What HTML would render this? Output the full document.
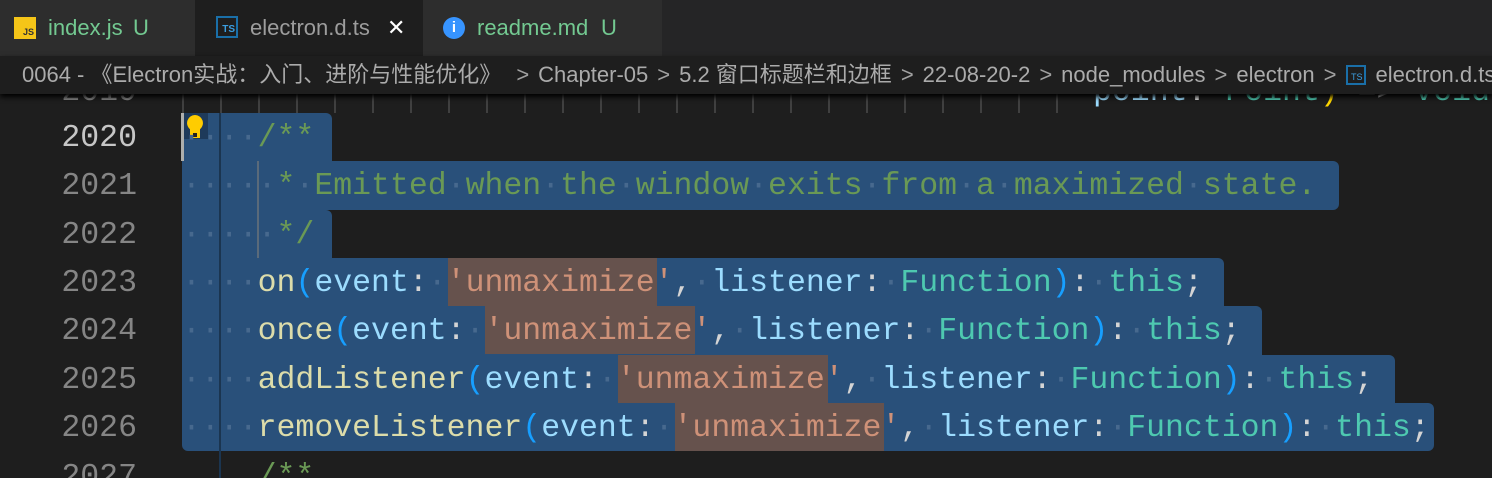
<!DOCTYPE html>
<html><head><meta charset="utf-8"><style>
*{margin:0;padding:0;box-sizing:border-box}
html,body{width:1492px;height:478px;overflow:hidden}
body{background:#1e1e1e;position:relative;font-family:"Liberation Sans","Noto Sans CJK SC",sans-serif}
.tabs{position:absolute;left:0;top:0;width:1492px;height:56px;background:#252526}
.tab{position:absolute;top:0;height:56px;background:#2d2d2d;font-size:22px;line-height:56px;white-space:nowrap}
.bc{position:absolute;left:0;top:56px;width:1492px;height:38px;background:#1e1e1e;color:#ababab;font-size:22px;line-height:38px;white-space:nowrap;padding-left:22px;box-shadow:0 3px 5px #000;z-index:5;overflow:hidden}
.bc i{font-style:normal;display:inline-block;margin:0 9px 0 9px;color:#a0a0a0}
.ln{position:absolute;left:0;width:137px;text-align:right;font-family:"Liberation Mono",monospace;font-size:31.5px;color:#858585;height:48.4px;line-height:52px}
.code{position:absolute;left:182px;font-family:"Liberation Mono",monospace;font-size:31.5px;white-space:pre;height:48.4px;line-height:52px;color:#d4d4d4}
.sel{position:absolute;background:#29507a;height:48.6px}
.str{position:absolute;background:#66524d;height:48.4px}
.w{color:#47698e}.f{color:#dcdcaa}.p{color:#9cdcfe}.s{color:#ce9178}.t{color:#4ec9b0}.c{color:#6a9955}.b{color:#179fff}
.tick{position:absolute;top:94px;width:2px;height:19px;background:#404040}
</style></head><body>
<div class="tabs">
 <div class="tab" style="left:0;width:195px">
  <span style="position:absolute;left:14px;top:17px;width:22px;height:22px;background:#f5c518;font-size:9px;line-height:9px;color:#333;font-weight:bold"><span style="position:absolute;right:2px;bottom:2px">JS</span></span>
  <span style="position:absolute;left:48px;color:#73c991">index.js</span><span style="position:absolute;left:133px;color:#73c991">U</span></div>
 <div class="tab" style="left:195px;width:228px;background:#1e1e1e">
  <span style="position:absolute;left:21px;top:16px;width:22px;height:22px;border:2px solid #1a6fa8;font-size:10px;line-height:10px;color:#3b9ee0;font-weight:bold"><span style="position:absolute;right:1px;bottom:1px">TS</span></span>
  <span style="position:absolute;left:55px;color:#9d9d9d">electron.d.ts</span><span style="position:absolute;left:192px;color:#fff;font-size:22px">✕</span></div>
 <div class="tab" style="left:423px;width:239px">
  <span style="position:absolute;left:20px;top:17px;width:22px;height:22px;border-radius:50%;background:#3794ff;color:#fff;font-size:15px;line-height:22px;text-align:center;font-weight:bold">i</span>
  <span style="position:absolute;left:54px;color:#73c991">readme.md</span><span style="position:absolute;left:178px;color:#73c991">U</span></div>
</div>
<div class="bc">0064 - 《Electron实战：入门、进阶与性能优化》 <i>&gt;</i>Chapter-05<i>&gt;</i>5.2 窗口标题栏和边框<i>&gt;</i>22-08-20-2<i>&gt;</i>node_modules<i>&gt;</i>electron<i>&gt;</i><span style="display:inline-block;width:20px;height:20px;border:2px solid #1a6fa8;vertical-align:-3px;font-size:9px;line-height:9px;color:#3b9ee0;position:relative;margin:0 10px 0 0"><span style="position:absolute;right:1px;bottom:1px">TS</span></span>electron.d.ts</div>

<div class="ln" style="top:67px">2019</div>
<div class="code" style="top:67px;left:1093px"><span class="p">point</span>: <span class="t">Point</span><span style="color:#ffd700">)</span> =&gt; <span class="t">void</span></div>
<div class="tick" style="left:182px"></div><div class="tick" style="left:220px"></div><div class="tick" style="left:258px"></div><div class="tick" style="left:296px"></div><div class="tick" style="left:334px"></div><div class="tick" style="left:372px"></div><div class="tick" style="left:410px"></div><div class="tick" style="left:448px"></div><div class="tick" style="left:486px"></div><div class="tick" style="left:524px"></div><div class="tick" style="left:562px"></div><div class="tick" style="left:600px"></div><div class="tick" style="left:638px"></div><div class="tick" style="left:676px"></div><div class="tick" style="left:714px"></div><div class="tick" style="left:752px"></div><div class="tick" style="left:790px"></div><div class="tick" style="left:828px"></div><div class="tick" style="left:866px"></div><div class="tick" style="left:904px"></div><div class="tick" style="left:942px"></div><div class="tick" style="left:980px"></div><div class="tick" style="left:1018px"></div><div class="tick" style="left:1056px"></div>

<div class="sel" style="left:182px;top:113px;width:150px;border-radius:0 6px 0 0"></div>
<div class="sel" style="left:182px;top:161px;width:1157px;border-radius:0 6px 6px 0"></div>
<div class="sel" style="left:182px;top:210px;width:150px;border-radius:0 6px 0 0"></div>
<div class="sel" style="left:182px;top:258px;width:1042px;border-radius:0 6px 0 0"></div>
<div class="sel" style="left:182px;top:306px;width:1080px;border-radius:0 6px 0 0"></div>
<div class="sel" style="left:182px;top:355px;width:1213px;border-radius:0 6px 0 0"></div>
<div class="sel" style="left:182px;top:403px;width:1252px;border-radius:0 6px 6px 6px;height:48px"></div>
<div class="str" style="left:448px;top:258px;width:209px"></div>
<div class="str" style="left:485px;top:306px;width:210px"></div>
<div class="str" style="left:618px;top:355px;width:210px"></div>
<div class="str" style="left:675px;top:403px;width:209px"></div>
<div style="position:absolute;left:219px;top:113px;width:2px;height:365px;background:#1b3550"></div>
<div style="position:absolute;left:257px;top:161px;width:2px;height:97px;background:#5a6a7a"></div>
<div style="position:absolute;left:181px;top:113px;width:3px;height:48px;background:#aeafad"></div>
<div style="position:absolute;left:184px;top:113px;width:24px;height:26px;background:#1e3a5a"></div>
<svg style="position:absolute;left:185px;top:114px" width="20" height="26" viewBox="0 0 20 26"><path d="M10 1a8 8 0 0 0-5 14.2V18h10v-2.8A8 8 0 0 0 10 1z" fill="#ffcc00"/><rect x="5" y="18" width="10" height="6" fill="#ffcc00"/><rect x="8" y="19" width="4" height="4" fill="#222"/></svg>

<div class="ln" style="top:113px;color:#c6c6c6">2020</div>
<div class="ln" style="top:161px">2021</div>
<div class="ln" style="top:210px">2022</div>
<div class="ln" style="top:258px">2023</div>
<div class="ln" style="top:306px">2024</div>
<div class="ln" style="top:355px">2025</div>
<div class="ln" style="top:403px">2026</div>
<div class="ln" style="top:452px">2027</div>

<div class="code" style="top:113px"><span class="w">····</span><span class="c">/**</span></div>
<div class="code" style="top:161px"><span class="w">·····</span><span class="c">*</span><span class="w">·</span><span class="c">Emitted</span><span class="w">·</span><span class="c">when</span><span class="w">·</span><span class="c">the</span><span class="w">·</span><span class="c">window</span><span class="w">·</span><span class="c">exits</span><span class="w">·</span><span class="c">from</span><span class="w">·</span><span class="c">a</span><span class="w">·</span><span class="c">maximized</span><span class="w">·</span><span class="c">state.</span></div>
<div class="code" style="top:210px"><span class="w">·····</span><span class="c">*/</span></div>
<div class="code" style="top:258px"><span class="w">····</span><span class="f">on</span><span class="b">(</span><span class="p">event</span>:<span class="w">·</span><span class="s">'unmaximize'</span>,<span class="w">·</span><span class="p">listener</span>:<span class="w">·</span><span class="t">Function</span><span class="b">)</span>:<span class="w">·</span><span class="t">this</span>;</div>
<div class="code" style="top:306px"><span class="w">····</span><span class="f">once</span><span class="b">(</span><span class="p">event</span>:<span class="w">·</span><span class="s">'unmaximize'</span>,<span class="w">·</span><span class="p">listener</span>:<span class="w">·</span><span class="t">Function</span><span class="b">)</span>:<span class="w">·</span><span class="t">this</span>;</div>
<div class="code" style="top:355px"><span class="w">····</span><span class="f">addListener</span><span class="b">(</span><span class="p">event</span>:<span class="w">·</span><span class="s">'unmaximize'</span>,<span class="w">·</span><span class="p">listener</span>:<span class="w">·</span><span class="t">Function</span><span class="b">)</span>:<span class="w">·</span><span class="t">this</span>;</div>
<div class="code" style="top:403px"><span class="w">····</span><span class="f">removeListener</span><span class="b">(</span><span class="p">event</span>:<span class="w">·</span><span class="s">'unmaximize'</span>,<span class="w">·</span><span class="p">listener</span>:<span class="w">·</span><span class="t">Function</span><span class="b">)</span>:<span class="w">·</span><span class="t">this</span>;</div>
<div class="code" style="top:452px">    <span class="c">/**</span></div>
</body></html>
